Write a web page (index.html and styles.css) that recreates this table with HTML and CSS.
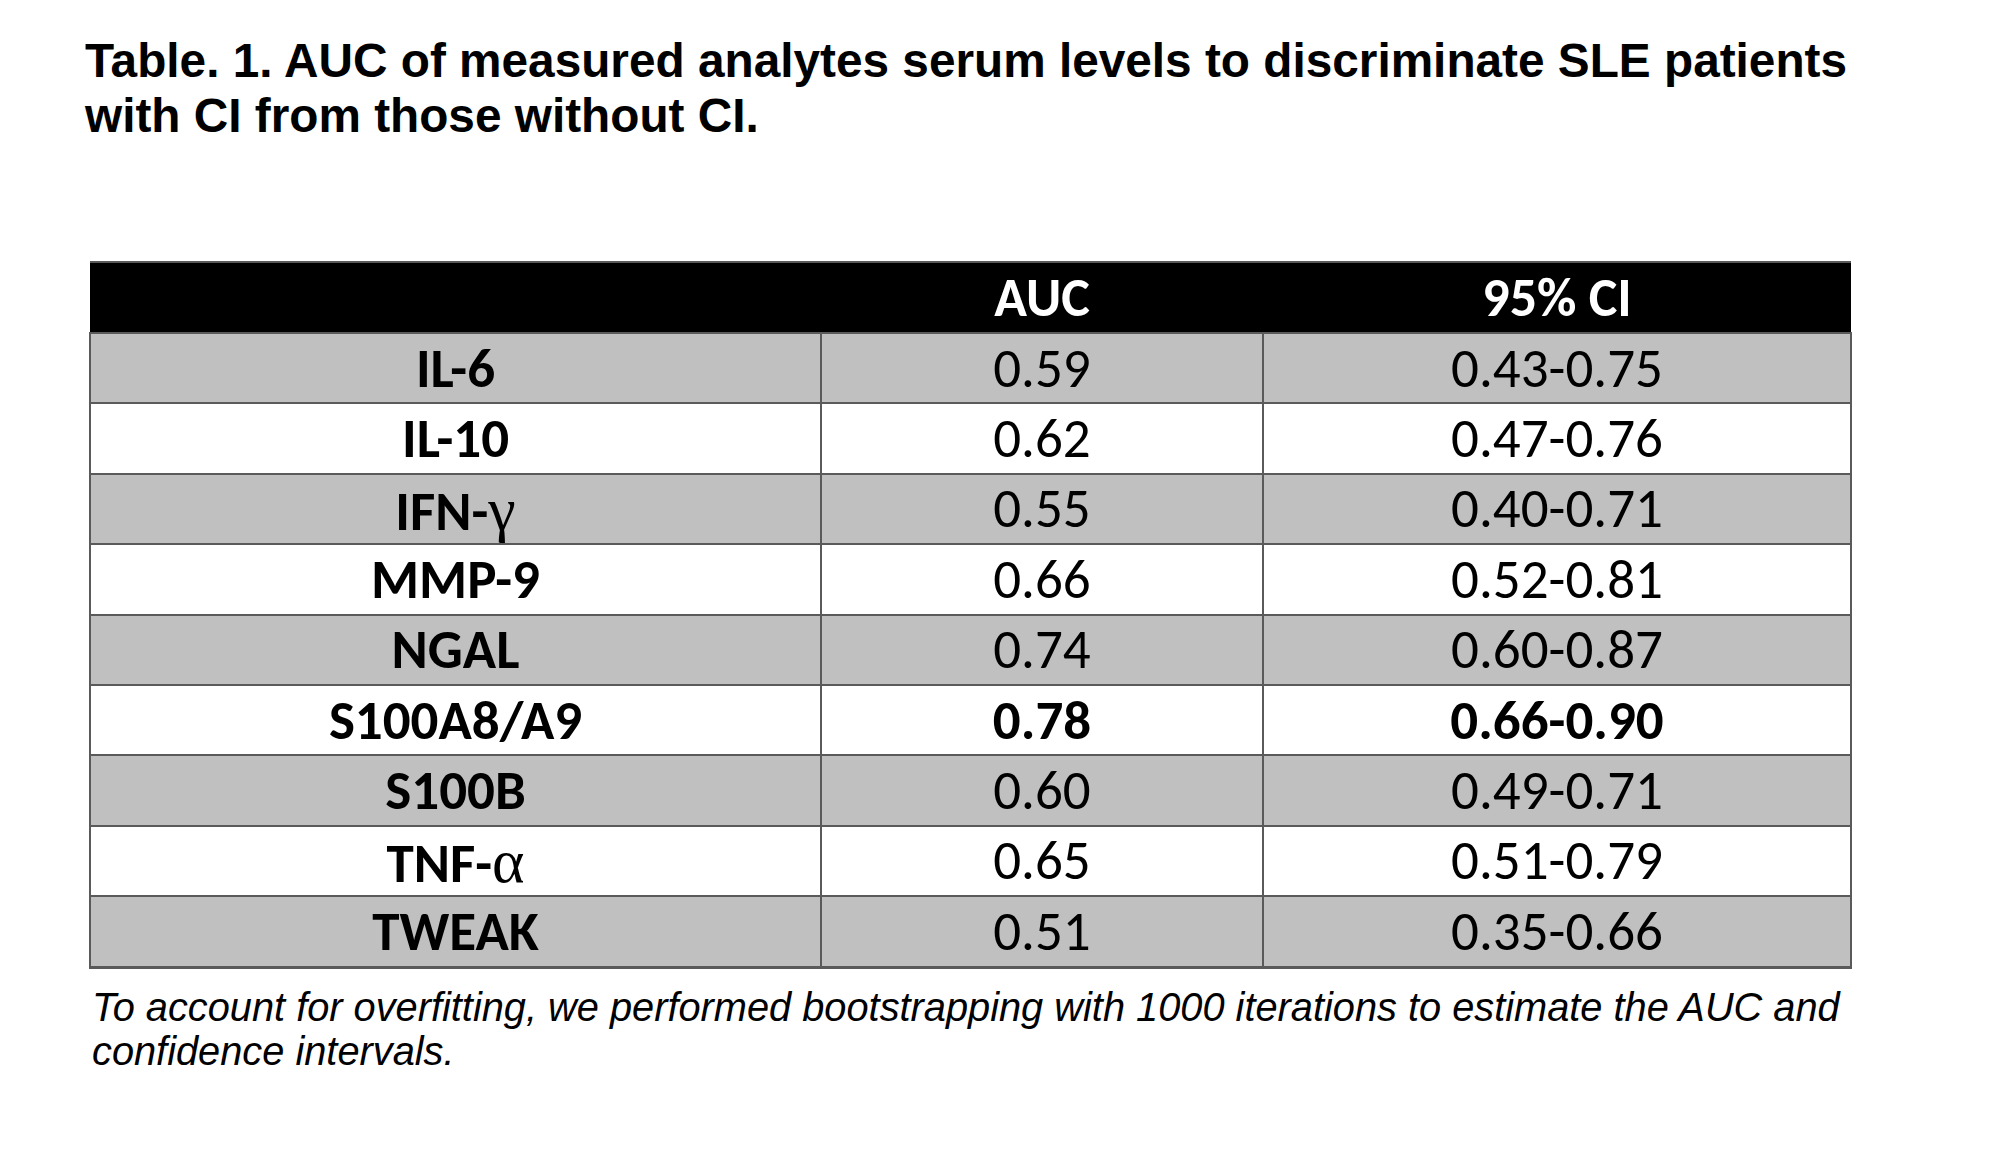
FILE: index.html
```html
<!DOCTYPE html>
<html lang="en">
<head>
<meta charset="utf-8">
<title>Table 1</title>
<link rel="stylesheet" href="styles.css">
</head>
<body>
<div class="page">
  <h1 class="title">Table. 1. AUC of measured analytes serum levels to discriminate SLE patients<br>with CI from those without CI.</h1>
  <table class="auc">
    <colgroup>
      <col class="c1"><col class="c2"><col class="c3">
    </colgroup>
    <thead>
      <tr><th></th><th>AUC</th><th>95% CI</th></tr>
    </thead>
    <tbody>
      <tr class="g"><td class="lab">IL-6</td><td>0.59</td><td>0.43-0.75</td></tr>
      <tr><td class="lab">IL-10</td><td>0.62</td><td>0.47-0.76</td></tr>
      <tr class="g"><td class="lab">IFN-<span class="sym">γ</span></td><td>0.55</td><td>0.40-0.71</td></tr>
      <tr><td class="lab">MMP-9</td><td>0.66</td><td>0.52-0.81</td></tr>
      <tr class="g"><td class="lab">NGAL</td><td>0.74</td><td>0.60-0.87</td></tr>
      <tr class="b"><td class="lab">S100A8/A9</td><td>0.78</td><td>0.66-0.90</td></tr>
      <tr class="g"><td class="lab">S100B</td><td>0.60</td><td>0.49-0.71</td></tr>
      <tr><td class="lab">TNF-<span class="sym">α</span></td><td>0.65</td><td>0.51-0.79</td></tr>
      <tr class="g"><td class="lab">TWEAK</td><td>0.51</td><td>0.35-0.66</td></tr>
    </tbody>
  </table>
  <p class="note">To account for overfitting, we performed bootstrapping with 1000 iterations to estimate the AUC and<br>confidence intervals.</p>
</div>
</body>
</html>
```
FILE: styles.css
```css
html, body {
  margin: 0;
  padding: 0;
  background: #ffffff;
}

.page {
  padding: 33px 0 0 85px;
}

.title {
  margin: 0;
  width: 1850px;
  font-family: "Liberation Sans", Arial, sans-serif;
  font-weight: bold;
  font-size: 47.75px;
  line-height: 55px;
  color: #000;
}

.auc {
  margin: 118px 0 0 4px;
  width: 1761px;
  border-collapse: collapse;
  table-layout: fixed;
  font-family: Carlito, Calibri, Lato, sans-serif;
  font-size: 55px;
  font-weight: 500;
  color: #000;
}

.c1 { width: 731px; }
.c2 { width: 442px; }
.c3 { width: 588px; }

.auc th {
  height: 69px;
  padding: 0;
  background: #000;
  color: #fff;
  font-size: 54px;
  font-weight: 600;
  text-align: center;
  vertical-align: middle;
  border-top: 2px solid #5a5a5a;
  line-height: 1;
}

.auc td {
  height: 68.4px;
  padding: 0;
  text-align: center;
  vertical-align: middle;
  border: 2px solid #5a5a5a;
  background: #fff;
  line-height: 1;
}

.auc tbody tr:last-child td {
  border-bottom-width: 3px;
}

.auc tr.g td {
  background: #c0c0c0;
}

.auc td.lab,
.auc tr.b td {
  font-weight: bold;
}

.sym {
  font-family: "Liberation Serif", "Times New Roman", serif;
  font-weight: normal;
  font-size: 62px;
}

.note {
  margin: 16px 0 0 7px;
  font-family: "Liberation Sans", Arial, sans-serif;
  font-style: italic;
  font-size: 39.77px;
  line-height: 44.6px;
  color: #000;
}
```
